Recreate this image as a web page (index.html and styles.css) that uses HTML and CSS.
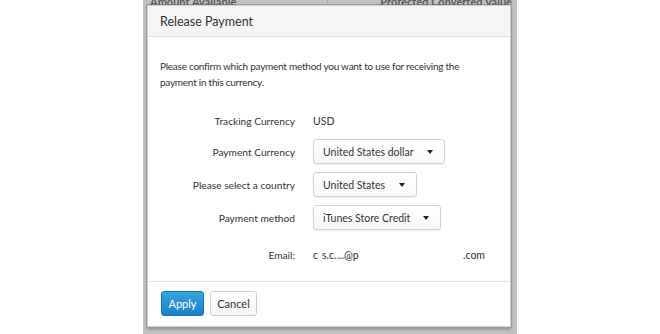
FILE: index.html
```html
<!DOCTYPE html>
<html>
<head>
<meta charset="utf-8">
<link rel="stylesheet" href="styles.css">
</head>
<body>
<div class="stage">
  <div class="bg-head">
    <div class="bg-cell">Amount Available</div>
    <div class="bg-cell bg-right">Protected Converted Value</div>
  </div>
  <div class="modal">
    <div class="modal-header">Release Payment</div>
    <div class="modal-body">
      <p class="intro">Please confirm which payment method you want to use for receiving the payment in this currency.</p>
      <div class="form">
        <div class="label">Tracking Currency</div>
        <div class="value">USD</div>
        <div class="label">Payment Currency</div>
        <div class="value"><div class="select sel-1"><span>United States dollar</span><i class="caret"></i></div></div>
        <div class="label">Please select a country</div>
        <div class="value"><div class="select sel-2"><span>United States</span><i class="caret"></i></div></div>
        <div class="label">Payment method</div>
        <div class="value"><div class="select sel-3"><span>iTunes Store Credit</span><i class="caret"></i></div></div>
        <div class="label email-row">Email:</div>
        <div class="value email-row email"><span class="e1">c</span><span class="e2">s.c.<span class="smudge">.....</span>@p</span><span class="e3">.com</span></div>
      </div>
    </div>
    <div class="modal-footer">
      <button class="btn btn-primary">Apply</button>
      <button class="btn btn-default">Cancel</button>
    </div>
  </div>
</div>
</body>
</html>
```
FILE: styles.css
```css
* { box-sizing: border-box; }
html, body { margin: 0; padding: 0; background: #fff; }
body {
  width: 660px;
  height: 334px;
  overflow: hidden;
  font-family: Lato, "Open Sans", sans-serif;
  color: #333;
}
.stage {
  margin-left: 143px;
  width: 374px;
  height: 334px;
  background: #c2c2c2;
  padding: 0 6px 0 4px;
}
.bg-head {
  display: flex;
  height: 5px;
  overflow: hidden;
  margin: 0 -6px 0 -4px;
  color: #5a5a5a;
  font-size: 11px;
  font-weight: bold;
  line-height: 4px;
}
.bg-cell {
  flex: 1;
  padding-left: 7px;
}
.bg-right {
  text-align: right;
  padding-right: 5px;
  border-left: 1px solid #a8a8a8;
}
.modal {
  width: 364px;
  height: 322px;
  background: #fff;
  border: 1px solid #d2d2d2;
  box-shadow: 0 0 0 1px #999, 0 2px 3px rgba(0,0,0,0.3);
  display: flex;
  flex-direction: column;
}
.modal-header {
  height: 31px;
  background: #f5f5f5;
  border-bottom: 1px solid #dedede;
  padding: 0 12px;
  display: flex;
  align-items: center;
  font-size: 12.5px;
  color: #333;
}
.modal-body {
  flex: 1;
  padding: 21px 12px 0;
  border-bottom: 1px solid #e2e2e2;
}
.intro {
  margin: 0;
  font-size: 10px;
  letter-spacing: -0.25px;
  line-height: 16px;
  width: 320px;
}
.form {
  margin-top: 21px;
  display: grid;
  grid-template-columns: 135px auto;
  column-gap: 18px;
  row-gap: 8px;
  grid-template-rows: 20px 25px 25px 25px 20px;
  font-size: 10.5px;
}
.label {
  font-size: 10.2px;
  text-align: right;
  display: flex;
  align-items: center;
  justify-content: flex-end;
}
.value {
  display: flex;
  align-items: center;
}
.email-row { margin-top: 13px; }
.select {
  height: 25px;
  border: 1px solid #d2d2d2;
  border-radius: 3px;
  background: linear-gradient(#ffffff, #f8f8f8);
  box-shadow: 0 1px 1px rgba(0,0,0,0.06);
  display: flex;
  align-items: center;
  padding: 0 11px 0 9px;
}
.sel-1 { width: 132px; }
.sel-2 { width: 104px; }
.sel-3 { width: 128px; }
.select span { flex: 1; white-space: nowrap; }
.caret {
  width: 0;
  height: 0;
  border-top: 4px solid #222;
  border-left: 3.5px solid transparent;
  border-right: 3.5px solid transparent;
}
.email .e1 { width: 9px; flex: none; }
.email .e2 { width: 141px; flex: none; }
.smudge { letter-spacing: -1px; color: #777; }
.modal-footer {
  height: 44px;
  padding: 9px 13px 0;
  display: flex;
  gap: 6px;
  align-items: flex-start;
}
.btn {
  height: 25px;
  border-radius: 3px;
  font-family: inherit;
  font-size: 11px;
  padding: 0;
  cursor: pointer;
}
.btn-primary {
  width: 43px;
  color: #fff;
  background: linear-gradient(#36a4e4, #1b80c9);
  border: 1px solid #1b72b8;
}
.btn-default {
  width: 47px;
  color: #333;
  background: linear-gradient(#ffffff, #f4f4f4);
  border: 1px solid #d0d0d0;
}
```
